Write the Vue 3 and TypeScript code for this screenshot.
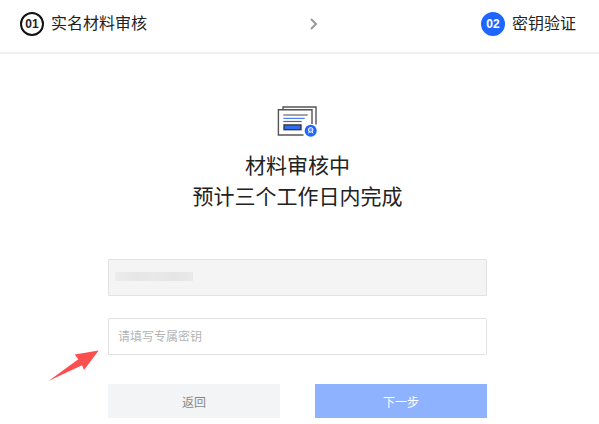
<script setup lang="ts">
import { ref } from 'vue'

const secretKey = ref('')
</script>

<template>
  <div class="page">
    <header class="steps">
      <div class="step">
        <span class="badge">01</span>
        <span>实名材料审核</span>
      </div>
      <svg class="chevron" viewBox="0 0 10 14" aria-hidden="true">
        <path d="M2 2 L7 7 L2 12" fill="none" stroke="#999" stroke-width="2" />
      </svg>
      <div class="step">
        <span class="badge active">02</span>
        <span>密钥验证</span>
      </div>
    </header>

    <main class="content">
      <svg class="doc-icon" viewBox="0 0 41 34" aria-hidden="true">
        <path d="M6 5 V3 H39 V20.5" fill="none" stroke="#555" stroke-width="1.4" />
        <path d="M26.5 31 H1.4 V5.7 H35 V20" fill="none" stroke="#555" stroke-width="1.4" />
        <path d="M6.3 11 H30.7" stroke="#666" stroke-width="1.2" />
        <path d="M6.3 14.4 H27.7" stroke="#4a82f5" stroke-width="1.2" />
        <path d="M6.3 17.5 H24.7" stroke="#666" stroke-width="1.2" />
        <rect x="7" y="20.9" width="17" height="4.8" fill="#2f6df6" stroke="#333" stroke-width="1.3" />
        <circle cx="33.7" cy="26.7" r="6" fill="#1f66ff" />
        <circle cx="33.7" cy="25.9" r="2.3" fill="#5f93ff" stroke="#fff" stroke-width="1" />
        <path d="M32.3 27.9 L31.4 29.4 M35.1 27.9 L36 29.4" stroke="#fff" stroke-width="1" />
      </svg>

      <h1 class="title">材料审核中<br />预计三个工作日内完成</h1>

      <form class="form" @submit.prevent>
        <div class="field">
          <input class="input" type="text" aria-label="账号" disabled />
          <span class="mask"></span>
        </div>
        <div class="field">
          <input v-model="secretKey" class="input" type="text" aria-label="专属密钥" placeholder="请填写专属密钥" />
          <svg class="pointer" viewBox="0 0 52 32" aria-hidden="true">
            <path d="M0.5 31 L30.3 9.3 L26.7 4.5 L50.7 0.5 L36 20 L34 15.3 Z" fill="#fc4f50" />
          </svg>
        </div>
        <div class="actions">
          <button class="button" type="button">返回</button>
          <button class="button primary" type="submit">下一步</button>
        </div>
      </form>
    </main>
  </div>
</template>

<style>
body {
  margin: 0;
  background: #fff;
}
</style>

<style scoped>
.page {
  font-family: "Liberation Sans", "Noto Sans CJK SC", sans-serif;
  color: #222;
}

.steps {
  display: flex;
  align-items: center;
  justify-content: space-between;
  height: 54px;
  padding: 0 23px 4px 20px;
  box-sizing: border-box;
  border-bottom: 2px solid #f0f0f0;
}

.step {
  display: flex;
  align-items: center;
  gap: 7px;
  font-size: 16px;
  line-height: 24px;
}

.badge {
  display: flex;
  align-items: center;
  justify-content: center;
  box-sizing: border-box;
  width: 24px;
  height: 24px;
  border: 2px solid #111;
  border-radius: 50%;
  font-size: 12px;
  font-weight: 700;
  line-height: 20px;
}

.badge.active {
  border-color: #1f66ff;
  background: #1f66ff;
  color: #fff;
}

.chevron {
  width: 10px;
  height: 14px;
}

.content {
  display: flex;
  flex-direction: column;
  align-items: center;
  padding: 50px 4px 6px 0;
}

.doc-icon {
  width: 41px;
  height: 34px;
}

.title {
  margin: 12px 0 0;
  font-size: 21px;
  font-weight: 400;
  line-height: 31px;
  text-align: center;
}

.form {
  display: flex;
  flex-direction: column;
  gap: 22px;
  width: calc(100% - 216px);
  margin-top: 47px;
}

.field {
  position: relative;
  display: flex;
}

.input {
  box-sizing: border-box;
  width: 100%;
  height: 37px;
  padding: 0 9px;
  border: 1px solid #e2e2e2;
  border-radius: 1px;
  background: #fff;
  color: #222;
  font: 12px "Liberation Sans", "Noto Sans CJK SC", sans-serif;
}

.input:disabled {
  background: #f4f4f4;
}

.input::placeholder {
  color: #b4b4b4;
  opacity: 1;
}

.mask {
  position: absolute;
  top: 13px;
  left: 7px;
  width: 78px;
  height: 9px;
  background: linear-gradient(90deg, #ececec, #e6e6e6 30%, #e9e9e9 50%, #e5e5e5 75%, #e9e9e9);
}

.pointer {
  position: absolute;
  top: 32px;
  left: -60px;
  width: 52px;
  height: 32px;
}

.actions {
  display: grid;
  grid-template-columns: 1fr 1fr;
  gap: 35px;
  margin-top: 7px;
}

.button {
  height: 34px;
  padding: 0;
  border: 0;
  background: #f3f4f6;
  color: #888;
  font: 12px "Liberation Sans", "Noto Sans CJK SC", sans-serif;
}

.button.primary {
  background: #8fb2ff;
  color: #fff;
}
</style>
